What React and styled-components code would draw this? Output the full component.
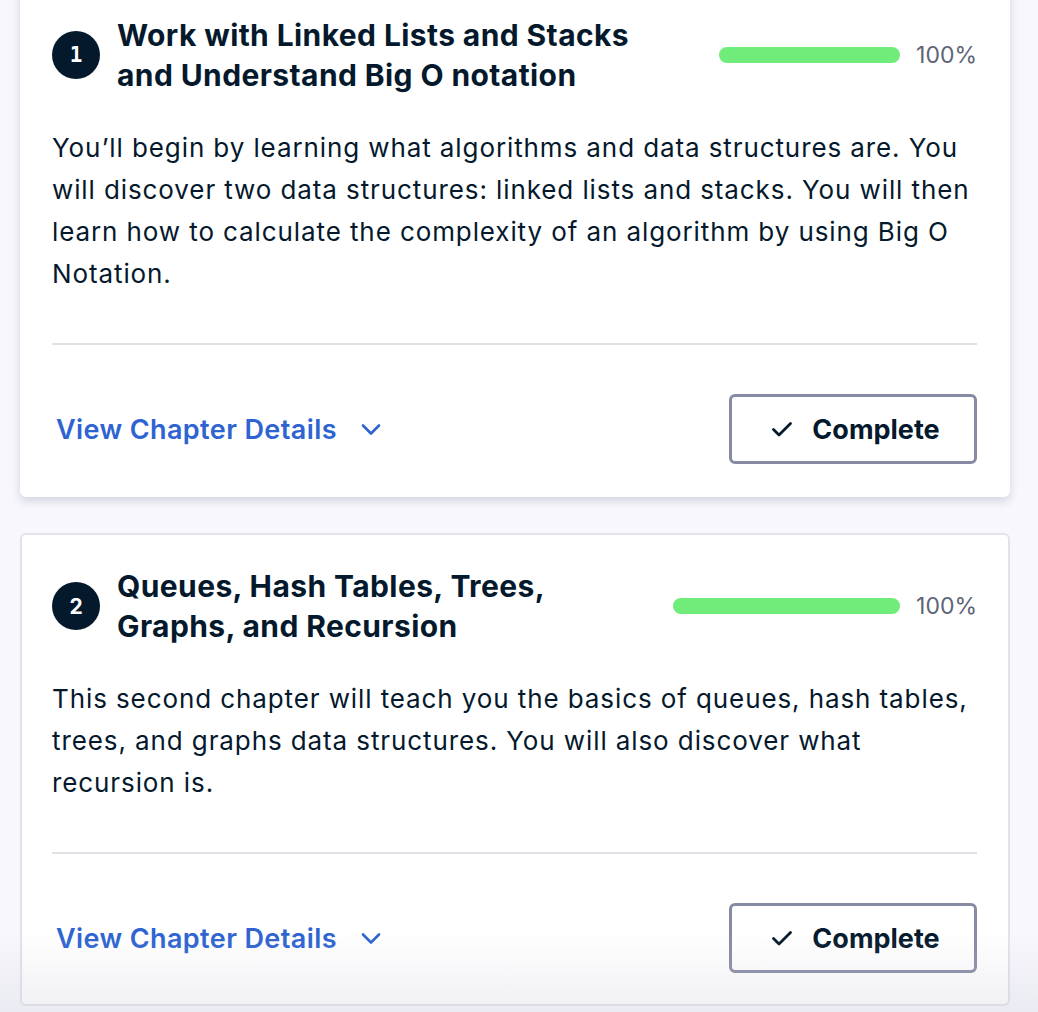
import React from 'react';
import styled, { createGlobalStyle } from 'styled-components';

const GlobalStyle = createGlobalStyle`
  html, body {
    margin: 0;
    padding: 0;
    background: #f7f7fc;
    font-family: Inter, "Noto Sans", sans-serif;
    color: #05192d;
  }
`;

const Page = styled.div`
  position: relative;
  width: 1038px;
  height: 1012px;
  overflow: hidden;
`;

const List = styled.div`
  display: flex;
  flex-direction: column;
  gap: 36px;
  padding: 0 28px 0 20px;
  margin-top: -18px;
`;

const Card = styled.div`
  background: #fff;
  border-radius: 6px;
  border: 2px solid ${p => (p.active ? '#fff' : '#e2e2ea')};
  box-shadow: ${p => (p.active ? '0 4px 10px rgba(48, 57, 105, 0.18)' : 'none')};
  padding: 31px 31px 31px 30px;
`;

const Header = styled.div`
  display: flex;
  align-items: center;
`;

const Badge = styled.div`
  flex: none;
  width: 48px;
  height: 48px;
  border-radius: 50%;
  background: #05192d;
  color: #fff;
  display: flex;
  align-items: center;
  justify-content: center;
  font-family: ${p => (p.mono ? '"DejaVu Sans Mono", monospace' : 'Inter, sans-serif')};
  font-weight: 700;
  font-size: 21px;
  margin-right: 17px;
`;

const Title = styled.h3`
  margin: 0;
  font-size: 30px;
  line-height: 40px;
  font-weight: 700;
  letter-spacing: 0.4px;
  flex: 1;
`;

const Progress = styled.div`
  flex: none;
  display: flex;
  align-items: center;
  gap: 16px;
`;

const Track = styled.div`
  height: 16px;
  border-radius: 8px;
  background: #70ec7a;
`;

const Percent = styled.span`
  font-size: 23px;
  color: #5d6576;
`;

const Description = styled.p`
  margin: 32px 0 0;
  font-size: 26px;
  line-height: 42px;
  letter-spacing: 0.9px;
  color: #05192d;
`;

const Divider = styled.hr`
  border: 0;
  height: 2px;
  background: #e1e1e8;
  margin: 48px 0 0;
`;

const Footer = styled.div`
  display: flex;
  align-items: center;
  justify-content: space-between;
  margin-top: 49px;
`;

const DetailsLink = styled.a`
  display: flex;
  align-items: center;
  gap: 22px;
  color: #2e63d1;
  font-size: 27px;
  font-weight: 600;
  letter-spacing: 0.4px;
  cursor: pointer;
  padding-left: 4px;
`;

const CompleteButton = styled.button`
  width: 248px;
  height: 70px;
  border: 3px solid #878aa3;
  border-radius: 6px;
  background: #fff;
  color: #05192d;
  display: flex;
  align-items: center;
  justify-content: center;
  gap: 18px;
  font-family: Inter, sans-serif;
  font-size: 27px;
  font-weight: 700;
  padding: 0 0 0 4px;
`;

const Fade = styled.div`
  position: absolute;
  left: 0;
  right: 0;
  bottom: 0;
  height: 80px;
  background: linear-gradient(rgba(200, 200, 214, 0), rgba(200, 200, 214, 0.28));
  pointer-events: none;
`;

const Chevron = () => (
  <svg width="24" height="24" viewBox="0 0 24 24" fill="none" stroke="currentColor" strokeWidth="2.6" strokeLinecap="round" strokeLinejoin="round">
    <path d="M4 8.5l8 8 8-8" />
  </svg>
);

const Check = () => (
  <svg width="24" height="24" viewBox="0 0 24 24" fill="none" stroke="currentColor" strokeWidth="2.8" strokeLinecap="round" strokeLinejoin="round">
    <path d="M3.5 12.5l5.5 5.5 11.5-11.5" />
  </svg>
);

const chapters = [
  {
    num: '1',
    mono: true,
    title: <>Work with Linked Lists and Stacks<br />and Understand Big O notation</>,
    bar: 181,
    text: 'You\u2019ll begin by learning what algorithms and data structures are. You will discover two data structures: linked lists and stacks. You will then learn how to calculate the complexity of an algorithm by using Big O Notation.',
    active: true,
  },
  {
    num: '2',
    mono: false,
    title: <>Queues, Hash Tables, Trees,<br />Graphs, and Recursion</>,
    bar: 227,
    text: 'This second chapter will teach you the basics of queues, hash tables, trees, and graphs data structures. You will also discover what recursion is.',
    active: false,
  },
];

export default function App() {
  return (
    <Page>
      <GlobalStyle />
      <List>
        {chapters.map(c => (
          <Card key={c.num} active={c.active}>
            <Header>
              <Badge mono={c.mono}>{c.num}</Badge>
              <Title>{c.title}</Title>
              <Progress>
                <Track style={{ width: c.bar }} />
                <Percent>100%</Percent>
              </Progress>
            </Header>
            <Description>{c.text}</Description>
            <Divider />
            <Footer>
              <DetailsLink>View Chapter Details <Chevron /></DetailsLink>
              <CompleteButton><Check /> Complete</CompleteButton>
            </Footer>
          </Card>
        ))}
      </List>
      <Fade />
    </Page>
  );
}
